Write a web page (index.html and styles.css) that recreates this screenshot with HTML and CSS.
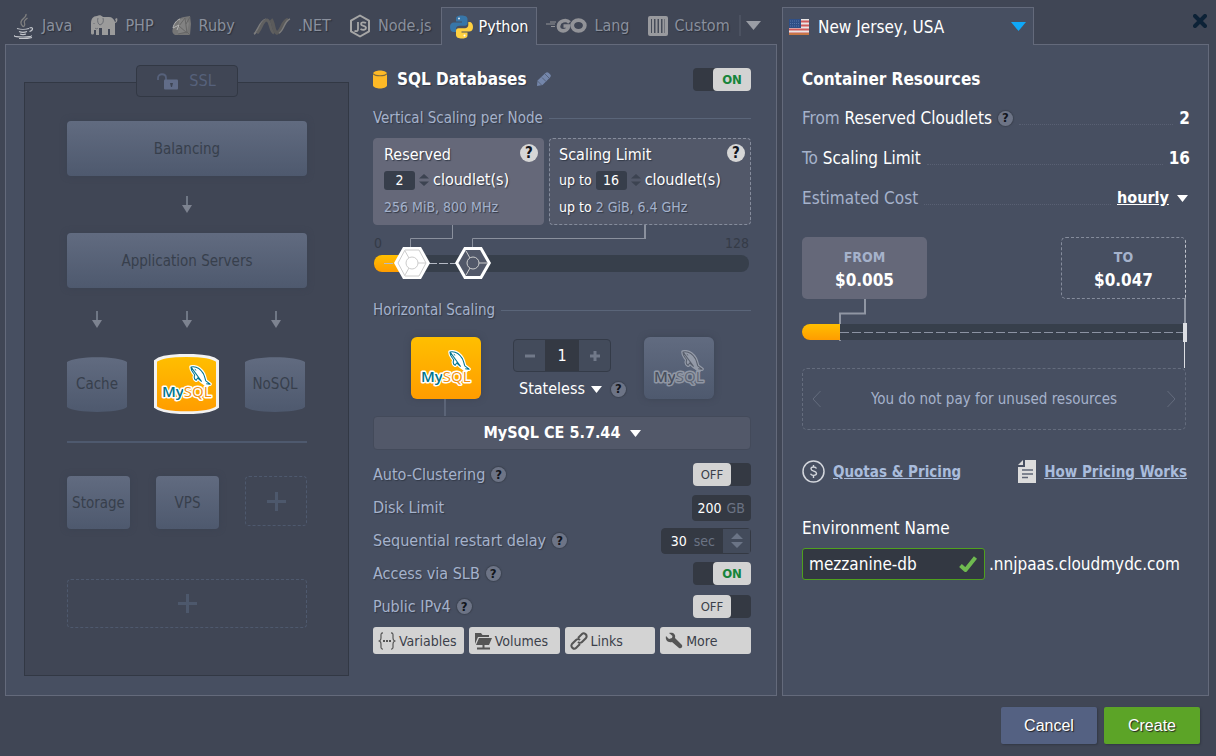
FILE: index.html
```html
<!DOCTYPE html>
<html lang="en">
<head>
<meta charset="utf-8">
<title>New Environment</title>
<link rel="stylesheet" href="styles.css">
</head>
<body>
<svg class="sprite" aria-hidden="true">
  <defs>
    <linearGradient id="db-fill" x1="0" y1="0" x2="0" y2="1"><stop offset="0" stop-color="#ffbf00"/><stop offset="1" stop-color="#ff9c00"/></linearGradient>
    <linearGradient id="idle-fill" x1="0" y1="0" x2="0" y2="1"><stop offset="0" stop-color="#616b80"/><stop offset="1" stop-color="#4e596e"/></linearGradient>
  </defs>
  <symbol id="dolphin" viewBox="0 0 24 24">
    <path d="M2 2C7 1 12 4 15 9c1.500 3 1.500 5 2.500 7.500l4.500 3.500-4-.5 1 2-4-3c-2-1.500-4-3.500-6-5L7.500 16C5.500 15 5 13 6 10.500 4 7 2 6 2 2z" fill="#fff" stroke="#fff" stroke-width="3.600" stroke-linejoin="round"/>
    <path d="M2 2C7 1 12 4 15 9c1.500 3 1.500 5 2.500 7.500l4.500 3.500-4-.5M13 17c-1.500-1-2.500-2-4-3.500L7.500 16C5.500 15 5 13 6 10.500 4 7 2 6 2 2z" fill="#fff" stroke="currentColor" stroke-width="1.100" stroke-linejoin="round"/>
    <path d="M6 4.500l1.500 1" stroke="currentColor"/>
  </symbol>
  <symbol id="down-arrow" viewBox="0 0 11 17">
    <path d="M4 0h2v9H4z" fill="#6f7785"/><path d="M0 9h10l-5 8z" fill="#7d8390"/>
  </symbol>
</svg>
<div class="page">
  <main class="wizard">
    <section class="builder">
      <nav class="tabs" aria-label="Language">
        <button class="tab" type="button">
          <svg width="22" height="26" viewBox="0 0 22 26" fill="none" stroke="#c3c6cc"><path d="M13 1c1 4-6 5-5 9 0 2 2 3 2 4M14.500 5c-3 2-4 3-3 5 1 2 0 3-1 4" stroke="#7f7f7f" stroke-width="1.300"/><path d="M4 15.500c3 1 9 1 12 0M6 18.500c2 .8 6 .8 8 0M7 21c2 .7 4 .7 6 0M16.500 15c4-1.500 4 2 0 3.500M2 22.500c-2 1.200 3 1.500 8 1.500s9-.5 8-1.500M6 25.500c4 .3 9 .2 13-1" stroke-width="1.200"/></svg>
          <span>Java</span></button>
        <button class="tab" type="button">
          <svg width="28" height="22" viewBox="0 0 28 22"><path d="M1 8c0-4 2-7 6-7 2-1 4-1 6 1h6c3 0 5 2 6 5 1 0 1-2 0-3l2-1c1 2 0 5-2 5v12h-5v-6h-2v6h-6v-7H9v7H6v-5H4v3c0 2-3 2-3 0z" fill="#9b9b9b"/><path d="M8 3c-1 3 0 6 2 7 3-1 4-4 3-7M4 8v1M5 13c1 1 2 1 3 0" fill="none" stroke="#6a6d74"/></svg>
          <span>PHP</span></button>
        <button class="tab" type="button">
          <svg width="20" height="20" viewBox="0 0 20 20"><path d="M12 1l6-1 1 8-1 11H3c-3-2-3-4-2-7 1-5 5-10 11-11z" fill="#767676"/><path d="M7 4l6-2 4 5-2 9-9 2z" fill="#828282"/><path d="M13 2l2 15-8-7zM6 18l9-2 3 3M18 1l-4 7" fill="none" stroke="#666"/><path d="M1 12c1-5 4-8 7-9M1 12l6-3-2 5" stroke="#b5b5b5" fill="none"/></svg>
          <span>Ruby</span></button>
        <button class="tab" type="button">
          <svg width="38" height="17" viewBox="0 0 38 17" fill="none"><path d="M1 16C5 14 7 2 13 1.500" stroke="#7c7c7c" stroke-width="2"/><path d="M4 15C8 12 9 2 14 2c4 1 3 12 7 13" stroke="#606060" stroke-width="3"/><path d="M18 1.500c3 3 2 12 6 13.500C29 13 29 3 35 1.500" stroke="#5b5b5b" stroke-width="3.500"/><path d="M26 15C31 13 31 3 37 1" stroke="#7c7c7c" stroke-width="1.500"/></svg>
          <span>.NET</span></button>
        <button class="tab" type="button">
          <svg width="22" height="24" viewBox="0 0 22 24" fill="none" stroke="#a6a6a6"><path d="M11 1.500l9 5.200v10.600l-9 5.200-9-5.200V6.700z" stroke-width="2" stroke-linejoin="round"/><path d="M9 8v7c0 2-1 2.500-3.500 2M17 9c-2-1.200-5-.8-5 1 0 2.500 5 1.300 5 4 0 2-3.500 2.300-5.500 1" stroke-width="1.800"/></svg>
          <span>Node.js</span></button>
        <button class="tab tab-active" type="button">
          <svg width="23" height="24" viewBox="0 0 23 24"><path d="M11.500.5C6 .5 6 2.800 6 4v2.500h6v1H4C1.500 7.500 0 9 0 12s1.500 5 3.500 5H6v-3c0-2 1.500-3.200 3.500-3.200H15c1.500 0 2.500-1.200 2.500-2.500V4c0-2.500-2.500-3.500-6-3.500z" fill="#3776a8"/><path d="M12 23.500c5.500 0 5.500-2.300 5.500-3.500v-2.500h-6v-1H19c2.500 0 4-1.500 4-4.500s-1.500-5-3.500-5h-1.200v3c0 2-1.500 3.200-3.300 3.200H8.500C7 13.200 6 14.400 6 15.700V20c0 2.500 2.500 3.500 6 3.500z" fill="#ffd141"/><circle cx="9" cy="3.500" r="1" fill="#dce6ef"/><circle cx="14.500" cy="20.500" r="1" fill="#fff"/></svg>
          <span>Python</span></button>
        <button class="tab" type="button">
          <svg width="41" height="16" viewBox="0 0 41 16" fill="none" stroke="#929398"><path d="M0 6h9M5 8.500h4M4 4h6" stroke-width="1"/><path d="M23.500 4.500c-3-3.500-10.500-2-11 3.500-.5 6.500 9.500 6.500 10 0h-5" stroke-width="3.600"/><ellipse cx="32.500" cy="7.500" rx="6.300" ry="5.400" stroke-width="3.800"/></svg>
          <span>Lang</span></button>
        <button class="tab" type="button">
          <svg width="20" height="20" viewBox="0 0 20 20"><rect width="20" height="20" rx="2" fill="#999a9e"/><path d="M3 3h14v14H3z" fill="#464c59"/><path d="M5 3v14M8.500 3v14M12 3v14M15.500 3v14" stroke="#999a9e" stroke-width="2"/></svg>
          <span>Custom</span></button>
        <button class="tab-more" type="button" aria-label="More languages"><svg width="15" height="9" viewBox="0 0 15 9"><path d="M0 0h15L7.500 9z" fill="#9a9da5"/></svg></button>
      </nav>

      <div class="panel builder-panel">
        <section class="topology" aria-label="Topology">
          <button class="ssl" type="button">
            <svg width="22" height="17" viewBox="0 0 22 17"><path d="M1 7V5c0-5 8-5 8 0v2" fill="none" stroke="#56617b" stroke-width="1.800"/><rect x="7" y="6.500" width="14" height="10" rx="1" fill="#616c88"/><path d="M13 10h3l-1 4h-1z" fill="#3e4554"/></svg>
            <span>SSL</span></button>
          <button class="layer" type="button">Balancing</button>
          <svg class="flow" width="11" height="17"><use href="#down-arrow"/></svg>
          <button class="layer" type="button">Application Servers</button>
          <div class="flow-row">
            <svg width="11" height="17"><use href="#down-arrow"/></svg>
            <svg width="11" height="17"><use href="#down-arrow"/></svg>
            <svg width="11" height="17"><use href="#down-arrow"/></svg>
          </div>
          <div class="stores">
            <button class="store" type="button">
              <svg class="store-shape" width="60" height="55" viewBox="0 0 60 55"><path d="M0 5C8-1.500 52-1.500 60 5v45c-8 6.500-52 6.500-60 0z" fill="url(#idle-fill)"/></svg>
              <span>Cache</span></button>
            <button class="store store-on" type="button" aria-label="MySQL">
              <svg width="65" height="60" viewBox="0 0 65 60"><path d="M1.500 7C10-.5 55-.5 63.500 7v46C55 60.500 10 60.500 1.500 53z" fill="url(#db-fill)" stroke="#f2f2f2" stroke-width="3"/><text class="logo-text" x="8" y="43"><tspan class="logo-my">My</tspan><tspan class="logo-sql">SQL</tspan></text><use class="logo-dolphin" href="#dolphin" x="35" y="11" width="23" height="23"/></svg></button>
            <button class="store" type="button">
              <svg class="store-shape" width="60" height="55" viewBox="0 0 60 55"><path d="M0 5C8-1.500 52-1.500 60 5v45c-8 6.500-52 6.500-60 0z" fill="url(#idle-fill)"/></svg>
              <span>NoSQL</span></button>
          </div>
          <hr class="split">
          <div class="extras">
            <button class="extra" type="button">Storage</button>
            <button class="extra" type="button">VPS</button>
            <button class="add add-small" type="button" aria-label="Add node"><svg width="19" height="19" viewBox="0 0 19 19"><path d="M9.500 0v19M0 9.500h19" stroke="#4d586c" stroke-width="3"/></svg></button>
          </div>
          <button class="add" type="button" aria-label="Add layer"><svg width="19" height="19" viewBox="0 0 19 19"><path d="M9.500 0v19M0 9.500h19" stroke="#4d586c" stroke-width="3"/></svg></button>
        </section>

        <section class="settings">
          <header class="settings-head">
            <svg width="14" height="19" viewBox="0 0 14 19"><path d="M0 3.500C1-.5 13-.5 14 3.500v12c-1 4-13 4-14 0z" fill="#fdb926"/><path d="M0 3.500c2 3 12 3 14 0" fill="none" stroke="#7d6a3e" stroke-width="1.200"/></svg>
            <h2>SQL Databases</h2>
            <button class="plain" type="button" aria-label="Rename"><svg width="14" height="14" viewBox="0 0 14 14"><path d="M0 14l.5-5.500L8.500 1c1-1 2-1.200 3-.3l1.800 1.800c.9 1 .7 2-.3 3L5.500 13z" fill="#7486aa"/><path d="M8 2l4 4M5 5.500l4 4M.5 9l4 4" stroke="#56627b" stroke-width="1"/></svg></button>
            <label class="toggle toggle-on"><input type="checkbox" checked aria-label="SQL Databases"><span>ON</span></label>
          </header>

          <h3 class="legend">Vertical Scaling per Node</h3>
          <div class="limits">
            <div class="limit limit-solid">
              <div class="limit-title">Reserved</div>
              <div class="limit-value"><input type="text" value="2" aria-label="Reserved cloudlets"><button class="step" type="button" aria-label="Change reserved"><svg width="10" height="12" viewBox="0 0 10 12"><path d="M0 4.500L5 0l5 4.500zM0 7.500h10L5 12z" fill="#3c4351"/></svg></button><span class="unit">cloudlet(s)</span></div>
              <div class="limit-note"><span>256 MiB, 800 MHz</span></div>
              <button class="help help-light" type="button">?</button>
            </div>
            <div class="limit limit-dashed">
              <div class="limit-title">Scaling Limit</div>
              <div class="limit-value">up to <input type="text" value="16" aria-label="Scaling limit cloudlets"><button class="step" type="button" aria-label="Change limit"><svg width="10" height="12" viewBox="0 0 10 12"><path d="M0 4.500L5 0l5 4.500zM0 7.500h10L5 12z" fill="#3c4351"/></svg></button><span class="unit">cloudlet(s)</span></div>
              <div class="limit-note">up to <span>2 GiB, 6.4 GHz</span></div>
              <button class="help help-light" type="button">?</button>
            </div>
          </div>
          <div class="scale">
            <svg class="scale-links" width="378" height="24" viewBox="0 0 378 24" fill="none" stroke="#8a909d"><path d="M79.500 0v13.500h-42V24M99.500 24V13.500h172" /><path d="M272 0v14" stroke-width="2"/></svg>
            <div class="scale-ends"><span>0</span><span>128</span></div>
            <div class="track"><div class="track-fill"></div><div class="track-dash"></div>
              <input class="knob knob-solid" type="range" min="0" max="100" value="6" aria-label="Reserved">
              <input class="knob knob-open" type="range" min="0" max="100" value="24" aria-label="Scaling limit">
            </div>
          </div>

          <h3 class="legend">Horizontal Scaling</h3>
          <div class="nodes">
            <button class="node node-on" type="button" aria-label="MySQL node"><svg width="56" height="40" viewBox="0 0 56 40"><text class="logo-text" x="3" y="34"><tspan class="logo-my">My</tspan><tspan class="logo-sql">SQL</tspan></text><use class="logo-dolphin" href="#dolphin" x="30" y="2" width="23" height="23"/></svg></button>
            <div class="count">
              <div class="counter">
                <button type="button" aria-label="Fewer"><svg width="12" height="12" viewBox="0 0 12 12"><path d="M1 6h10" stroke="#717989" stroke-width="3"/></svg></button>
                <input type="text" value="1" aria-label="Node count">
                <button type="button" aria-label="More"><svg width="12" height="12" viewBox="0 0 12 12"><path d="M1 6h10M6 1v10" stroke="#717989" stroke-width="3"/></svg></button>
              </div>
              <div class="mode">
                <select aria-label="Scaling mode"><option>Stateless</option></select>
                <svg width="11" height="7" viewBox="0 0 11 7"><path d="M0 0h11L5.500 7z" fill="#fff"/></svg>
                <button class="help" type="button">?</button>
              </div>
            </div>
            <button class="node node-off" type="button" aria-label="Additional MySQL node"><svg width="56" height="40" viewBox="0 0 56 40" opacity=".35"><text class="logo-text" x="3" y="34"><tspan class="logo-my">My</tspan><tspan class="logo-sql">SQL</tspan></text><use class="logo-dolphin" href="#dolphin" x="30" y="2" width="23" height="23"/></svg></button>
          </div>
          <div class="version">
            <select aria-label="Stack version"><option>MySQL CE 5.7.44</option></select>
            <svg width="11" height="7" viewBox="0 0 11 7"><path d="M0 0h11L5.500 7z" fill="#fff"/></svg>
          </div>

          <div class="options">
            <div class="option"><span>Auto-Clustering</span><button class="help" type="button">?</button>
              <label class="toggle"><input type="checkbox" aria-label="Auto-Clustering"><span>OFF</span></label></div>
            <div class="option"><label for="disk">Disk Limit</label>
              <div class="field"><input id="disk" type="text" value="200"><span>GB</span></div></div>
            <div class="option"><label for="delay">Sequential restart delay</label><button class="help" type="button">?</button>
              <div class="field field-step"><input id="delay" type="text" value="30"><span>sec</span><button type="button" aria-label="Change delay"><svg width="12" height="15" viewBox="0 0 12 15"><path d="M0 6l6-6 6 6zM0 9h12l-6 6z" fill="#6b7486"/></svg></button></div></div>
            <div class="option"><span>Access via SLB</span><button class="help" type="button">?</button>
              <label class="toggle toggle-on"><input type="checkbox" checked aria-label="Access via SLB"><span>ON</span></label></div>
            <div class="option"><span>Public IPv4</span><button class="help" type="button">?</button>
              <label class="toggle"><input type="checkbox" aria-label="Public IPv4"><span>OFF</span></label></div>
          </div>
          <div class="actions">
            <button type="button"><svg width="18" height="18" viewBox="0 0 18 18" fill="none" stroke="#555"><path d="M5 .8C2.500.8 3 3 3 5.500S2.500 9 .5 9C2.500 9 3 10 3 12.500s-.5 4.700 2 4.700M13 .8c2.500 0 2 2.200 2 4.700S15.500 9 17.500 9C15.500 9 15 10 15 12.500s.5 4.700-2 4.700" stroke-width="1.200"/><path d="M5 9h8" stroke-width="2" stroke-dasharray="2 1"/></svg>Variables</button>
            <button type="button"><svg width="18" height="18" viewBox="0 0 18 18" fill="#555"><path d="M1 1h6l1.500 2H15v2H4L1 12zM5 6h13l-3 7H2zM8.500 13h2v3h-2zM3 15.500h13v2H3z"/></svg>Volumes</button>
            <button type="button"><svg width="18" height="18" viewBox="0 0 18 18" fill="none" stroke="#555" stroke-width="2"><path d="M8 6l4-4c2-2 6 1 4 4l-4 4c-1 1-3 1-4 0M10 12l-4 4c-2 2-6-1-4-4l4-4c1-1 3-1 4 0"/></svg>Links</button>
            <button type="button"><svg width="18" height="18" viewBox="0 0 18 18" fill="#555"><path d="M4 1c4-1 7 1 6 5l7 7c1 2-1 4-3 3L7 10C3 11 0 8 1 4l3 3 3-1 .5-2z"/></svg>More</button>
          </div>
        </section>
      </div>
    </section>

    <section class="summary">
      <div class="summary-top">
        <div class="region">
          <svg width="20" height="16" viewBox="0 0 20 16"><rect width="20" height="16" fill="#e9e5e5"/><path d="M0 2.500h20M0 6.500h20M0 10.500h20M0 14.500h20" stroke="#cf5a5a" stroke-width="1.800"/><rect width="12" height="9" fill="#2f4f86"/><path d="M1 2h10M1 4.500h10M1 7h10" stroke="#5875a8" stroke-dasharray="1 1"/><path d="M0 15h20" stroke="#c77645" stroke-width="2"/></svg>
          <select aria-label="Region"><option>New Jersey, USA</option></select>
          <svg width="15" height="9" viewBox="0 0 15 9"><path d="M0 0h15L7.500 9z" fill="#0fa8f8"/></svg>
        </div>
        <button class="plain close" type="button" aria-label="Close"><svg width="14" height="14" viewBox="0 0 14 14"><path d="M2 2l10 10M12 2L2 12" stroke="#0d2237" stroke-width="4" stroke-linecap="round"/></svg></button>
      </div>
      <div class="panel summary-panel">
        <h2>Container Resources</h2>
        <div class="line"><span><i>From</i> Reserved Cloudlets</span><button class="help" type="button">?</button><span class="dots"></span><b>2</b></div>
        <div class="line"><span><i>To</i> Scaling Limit</span><span class="dots"></span><b>16</b></div>
        <div class="line"><span><i>Estimated Cost</i></span><span class="dots"></span>
          <select class="period" aria-label="Billing period"><option>hourly</option></select>
          <svg width="11" height="7" viewBox="0 0 11 7"><path d="M0 0h11L5.500 7z" fill="#fff"/></svg></div>

        <div class="prices">
          <div class="price price-from"><span>FROM</span><b>$0.005</b></div>
          <div class="price price-to"><span>TO</span><b>$0.047</b></div>
        </div>
        <div class="cost">
          <svg class="cost-link" width="66" height="42" viewBox="0 0 66 42" fill="none" stroke="#9096a3" stroke-width="2"><path d="M63 0v14.500H38V42"/></svg>
          <div class="cost-bar"><div class="cost-fill"></div><div class="cost-dash"></div><div class="cost-mark"></div></div>
        </div>
        <div class="note">
          <button class="plain" type="button" aria-label="Previous"><svg width="9" height="18" viewBox="0 0 9 18"><path d="M8.500 1L1 9l7.500 8" fill="none" stroke="#646c7d"/></svg></button>
          <span>You do not pay for unused resources</span>
          <button class="plain" type="button" aria-label="Next"><svg width="9" height="18" viewBox="0 0 9 18"><path d="M.5 1L8 9 .5 17" fill="none" stroke="#646c7d"/></svg></button>
        </div>

        <div class="links">
          <a href="#quotas"><svg width="23" height="23" viewBox="0 0 23 23" fill="none" stroke="#d3d6dc"><circle cx="11.500" cy="11.500" r="10.500" stroke-width="1.500"/><path d="M14.500 8.500c-1-2-5.500-2-5.500.3 0 3 5.500 1.700 5.500 4.800 0 2.400-5 2.400-6 .2M11.500 5v2M11.500 15.500v2.500" stroke-width="1.400"/></svg><span>Quotas &amp; Pricing</span></a>
          <a href="#pricing"><svg width="18" height="23" viewBox="0 0 18 23"><path d="M7 0h11v23H0V7h7z" fill="#dcdcdc"/><path d="M5 0v5H0z" fill="#dcdcdc"/><path d="M4 10h11M4 14h11M4 17.500h6" stroke="#5e6575" stroke-width="1.500"/></svg><span>How Pricing Works</span></a>
        </div>

        <label class="env-label" for="env">Environment Name</label>
        <div class="env">
          <div class="env-box"><input id="env" type="text" value="mezzanine-db"><svg width="18" height="16" viewBox="0 0 18 16"><path d="M1.500 9.500L6.500 14 16.500 1.500" fill="none" stroke="#6fba50" stroke-width="4" stroke-linejoin="round"/></svg></div>
          <span>.nnjpaas.cloudmydc.com</span>
        </div>
      </div>
    </section>
  </main>
  <footer class="footer">
    <button class="btn btn-cancel" type="button">Cancel</button>
    <button class="btn btn-create" type="button">Create</button>
  </footer>
</div>
</body>
</html>
```
FILE: styles.css
```css
* { box-sizing: border-box; }

body {
  margin: 0;
  background: #404655;
  color: #fff;
  font: 16px/20px "DejaVu Sans Condensed", "DejaVu Sans", sans-serif;
}

button, input, select {
  margin: 0;
  padding: 0;
  border: 0;
  background: none;
  color: inherit;
  font: inherit;
}

select { appearance: none; }
select option { color: #222; }
svg { display: block; flex: none; }
h2, h3 { margin: 0; font-weight: bold; }
.sprite { position: absolute; width: 0; height: 0; }
.plain { display: flex; }

.page {
  display: flex;
  flex-direction: column;
  min-height: 100vh;
}

.wizard {
  flex: 1;
  display: grid;
  grid-template-columns: minmax(0, 772fr) minmax(0, 427fr);
  gap: 5px;
  padding: 7px 7px 0 5px;
}

.builder, .summary {
  display: flex;
  flex-direction: column;
}

.panel {
  flex: 1;
  border: 1px solid #646a7b;
  background: #474f61;
}

/* Language tabs */
.tabs {
  display: flex;
  align-items: stretch;
  height: 37px;
  margin-left: -1px;
}

.tab {
  display: flex;
  align-items: center;
  gap: 7px;
  padding: 0 8px;
  border: 1px solid transparent;
  border-bottom: 0;
  color: #8a909d;
  text-shadow: 1px 1px 1px #2b303b;
}

.tab-active {
  height: 38px;
  position: relative;
  gap: 6px;
  border-color: #646a7b;
  background: #474f61;
  color: #fff;
}

.tab-more {
  align-self: center;
  padding: 6px 0 6px 5px;
  border-left: 2px solid #4c5261;
}

.builder-panel {
  display: grid;
  grid-template-columns: minmax(0, 325fr) minmax(0, 378fr);
  gap: 24px;
  padding: 22px 25px 19px 18px;
}

/* Topology */
.topology {
  position: relative;
  display: flex;
  flex-direction: column;
  margin-top: 15px;
  padding: 38px 41px 0 42px;
  border: 1px solid #323844;
  background: #404655;
  color: #373f4c;
  font-size: 15px;
}

.ssl {
  position: absolute;
  top: -18px;
  left: 50%;
  width: 102px;
  height: 32px;
  margin-left: -51px;
  display: flex;
  align-items: center;
  justify-content: center;
  gap: 10px;
  border: 1px solid #323844;
  border-radius: 4px;
  background: #404655;
  color: #56617b;
  font-size: 16px;
}

.layer {
  height: 55px;
  border-radius: 4px;
  background: linear-gradient(#616b80, #4e596e);
  box-shadow: 0 0 6px #3a4352;
}

.flow { align-self: center; margin: 20px 0; }

.flow-row {
  display: flex;
  justify-content: space-between;
  margin: 23px 25px 26px;
}

.stores {
  display: flex;
  align-items: center;
  justify-content: space-between;
  height: 60px;
  padding-right: 2px;
}

.store {
  display: grid;
  place-items: center;
}

.store > * { grid-area: 1 / 1; }

.logo-text {
  font: 600 15px "Open Sans", sans-serif;
  stroke: #fff;
  stroke-width: 3px;
  stroke-linejoin: round;
  paint-order: stroke;
}

.logo-my { fill: #00758f; }
.logo-sql { fill: #f29111; font-weight: 400; }
.logo-dolphin { color: #00758f; }

.split {
  width: 100%;
  height: 2px;
  margin: 27px 0 33px;
  border: 0;
  background: #4e596e;
}

.extras {
  display: flex;
  justify-content: space-between;
  margin-bottom: 50px;
}

.extra {
  width: 63px;
  height: 53px;
  border-radius: 4px;
  background: linear-gradient(#616b80, #4e596e);
  box-shadow: 0 0 6px #3a4352;
}

.add {
  display: flex;
  align-items: center;
  justify-content: center;
  height: 49px;
  border: 1px dashed #4e596e;
  border-radius: 4px;
}

.add-small { width: 62px; height: 50px; }

/* Settings */
.settings { text-shadow: 1px 1px 1px #323947; }

.settings-head {
  display: flex;
  align-items: center;
  gap: 10px;
  height: 24px;
}

.settings-head h2 { font-size: 17px; }

.toggle {
  display: flex;
  width: 58px;
  height: 23px;
  margin-left: auto;
  border-radius: 4px;
  background: #343943;
  color: #3b3f4a;
  font-size: 13px;
  text-shadow: none;
}

.toggle input {
  position: absolute;
  opacity: 0;
}

.toggle span {
  width: 38px;
  border-radius: 4px;
  background: #d3d3d3;
  line-height: 23px;
  text-align: center;
}

.toggle-on { justify-content: flex-end; }
.toggle-on span { color: #16843a; font-weight: bold; }

.legend {
  display: flex;
  align-items: center;
  gap: 6px;
  margin: 17px 0 10px;
  color: #a5b2cb;
  font-size: 15px;
  font-weight: normal;
}

.legend::after {
  content: "";
  flex: 1;
  border-top: 1px solid #5a6579;
}

.limits {
  display: grid;
  grid-template-columns: 171fr 202fr;
  gap: 5px;
}

.limit {
  position: relative;
  height: 87px;
  padding: 6px 9px;
  border: 1px solid #656879;
  border-radius: 4px;
  font-size: 14px;
}

.limit-solid { padding-left: 10px; background: #656879; }
.limit-dashed { border: 1px dashed #858c9c; background: #525869; }
.limit-title { font-size: 16px; }

.limit-value {
  display: flex;
  align-items: center;
  gap: 4px;
  margin: 5px 0 7px;
}

.limit-value input {
  width: 31px;
  height: 19px;
  border-radius: 3px;
  background: #373e4b;
  text-align: center;
  text-shadow: none;
}

.step { display: flex; }
.unit { font-size: 16px; }
.limit-note span { color: #a5b2cb; }

.help {
  display: flex;
  align-items: center;
  justify-content: center;
  flex: none;
  width: 15px;
  height: 15px;
  border-radius: 50%;
  background: #6d7486;
  box-shadow: 0 0 1px 1px #3c4351;
  color: #12151c;
  font-size: 13px;
  font-weight: bold;
  text-shadow: none;
}

.help-light {
  position: absolute;
  top: 5px;
  right: 5px;
  width: 18px;
  height: 18px;
  background: #d6d6d6;
  box-shadow: none;
  font-size: 15px;
}

.scale { position: relative; padding: 8px 2px 11px 1px; }
.scale-links { position: absolute; top: 0; left: 0; }

.scale-ends {
  display: flex;
  justify-content: space-between;
  color: #353b47;
  font-size: 14px;
  text-shadow: none;
}

.track {
  position: relative;
  height: 17px;
  margin-top: 2px;
  border-radius: 8px;
  background: #373f4b;
}

.track-fill {
  width: 12%;
  height: 17px;
  border-radius: 8px 0 0 8px;
  background: linear-gradient(#ffbf00, #ff9c00);
}

.track-dash {
  position: absolute;
  top: 8px;
  left: 10px;
  width: 72px;
  height: 1px;
  background: repeating-linear-gradient(90deg, #b5bac5 0 9px, transparent 9px 11px);
}

.knob {
  position: absolute;
  top: -8px;
  left: 0;
  width: 100%;
  height: 32px;
  appearance: none;
  pointer-events: none;
}

.knob::-webkit-slider-thumb {
  width: 36px;
  height: 32px;
  appearance: none;
  pointer-events: auto;
}

.knob-solid::-webkit-slider-thumb {
  background: url("data:image/svg+xml,%3Csvg xmlns='http://www.w3.org/2000/svg' width='36' height='32'%3E%3Cpath d='M9 0h18l9 16-9 16H9L0 16z' fill='%23fff'/%3E%3Cpath d='M11 3h14l7 13-7 13H11L4 16zM11 4l4 7M24 16h8M15 21l-4 7' fill='none' stroke='%23ccc'/%3E%3Ccircle cx='18' cy='16' r='6' fill='%23fff' stroke='%23ccc'/%3E%3C/svg%3E");
}

.knob-open::-webkit-slider-thumb {
  background: url("data:image/svg+xml,%3Csvg xmlns='http://www.w3.org/2000/svg' width='36' height='32'%3E%3Cpath d='M10 1.500h16l8.300 14.500-8.300 14.500h-16L1.700 16z' fill='%23525869' stroke='%23fff' stroke-width='3'/%3E%3Cpath d='M11 4l4 7M24 16h8M15 21l-4 7' fill='none' stroke='%23ccc'/%3E%3Ccircle cx='18' cy='16' r='6' fill='none' stroke='%23ccc'/%3E%3C/svg%3E");
}

.nodes {
  display: flex;
  justify-content: space-between;
  padding: 7px 37px 0 38px;
}

.node {
  position: relative;
  display: flex;
  align-items: center;
  justify-content: center;
  width: 70px;
  height: 62px;
  border-radius: 6px;
  box-shadow: 0 0 6px #3d4555;
  text-shadow: none;
}

.node-on { background: linear-gradient(#ffbf00, #ff9c00); }
.node-off { background: linear-gradient(#616b80, #4e596e); }
.node-off .logo-my { fill: #333; }
.node-off .logo-sql { fill: #777; }
.node-off .logo-dolphin { color: #555; }

.node-on::after {
  content: "";
  position: absolute;
  top: 62px;
  left: 33px;
  width: 2px;
  height: 17px;
  background: #5b6477;
}

.count { padding: 2px 0 0 14px; }

.counter {
  display: grid;
  grid-template-columns: 31px 34px 31px;
  width: 98px;
  height: 33px;
  border: 1px solid #343b48;
  border-radius: 4px;
  background: #434b5b;
}

.counter button {
  display: flex;
  align-items: center;
  justify-content: center;
}

.counter input {
  width: 34px;
  background: #343943;
  text-align: center;
}

.mode {
  display: flex;
  align-items: center;
  gap: 6px;
  margin-top: 7px;
  padding-left: 6px;
}

.mode .help { margin-left: 3px; }

.version {
  display: flex;
  align-items: center;
  justify-content: center;
  gap: 9px;
  height: 34px;
  margin-top: 17px;
  border: 1px solid #434a5a;
  border-radius: 4px;
  background: #525869;
  font-weight: bold;
}

.options { margin-top: 8px; }

.option {
  display: flex;
  align-items: center;
  gap: 6px;
  height: 33px;
  color: #a5b2cb;
}

.field {
  display: flex;
  align-items: center;
  height: 26px;
  margin-left: auto;
  padding: 0 6px;
  border-radius: 4px;
  background: #343943;
  color: #6b7384;
  font-size: 14px;
  text-shadow: none;
}

.field input {
  width: 29px;
  color: #fff;
}

.field-step {
  padding: 0;
  border: 1px solid #343943;
}

.field-step input { width: 32px; padding-left: 9px; }

.field-step button {
  display: flex;
  align-items: center;
  align-self: stretch;
  justify-content: center;
  width: 27px;
  margin-left: 8px;
  background: #434b5b;
}

.actions {
  display: grid;
  grid-template-columns: repeat(4, 1fr);
  gap: 5px;
  margin-top: 4px;
}

.actions button {
  display: flex;
  align-items: center;
  gap: 3px;
  height: 27px;
  padding-left: 5px;
  border-radius: 3px;
  background: #d3d3d3;
  color: #3b3f4a;
  font-size: 14px;
  text-shadow: none;
}

/* Summary */
.summary { font-size: 17px; }

.summary-top {
  display: flex;
  align-items: flex-start;
  justify-content: space-between;
  height: 37px;
}

.region {
  position: relative;
  display: flex;
  align-items: center;
  gap: 9px;
  width: 252px;
  height: 38px;
  padding: 0 7px 0 6px;
  border: 1px solid #646a7b;
  border-bottom: 0;
  background: #474f61;
}

.region select { flex: 1; min-width: 0; }
.close { margin: 7px 2px 0 0; }
.summary-panel { padding: 24px 18px 0 19px; }
.summary-panel h2 { margin-bottom: 19px; font-size: 17px; }

.line {
  display: flex;
  align-items: center;
  gap: 6px;
  height: 20px;
  margin-bottom: 20px;
}

.line i { color: #a5b2cb; font-style: normal; }

.dots {
  flex: 1;
  height: 14px;
  border-bottom: 1px dotted #596073;
}

.line svg { margin: 0 2px; }
.period { font-size: 16px; font-weight: bold; text-decoration: underline; }

.prices {
  display: flex;
  justify-content: space-between;
  margin-top: 29px;
  padding-right: 4px;
}

.price {
  display: flex;
  flex-direction: column;
  justify-content: center;
  gap: 3px;
  width: 125px;
  height: 62px;
  border-radius: 5px;
  text-align: center;
}

.price span { color: #a5b2cb; font-size: 14px; font-weight: bold; }
.price-from { background: #656879; }
.price-to { border: 1px dashed #858c9c; border-right-color: #c3c6ce; border-bottom-right-radius: 0; }

.cost {
  position: relative;
  padding: 25px 5px 28px 0;
}

.cost-link { position: absolute; top: 0; left: 0; }

.cost-bar {
  position: relative;
  height: 16px;
  border-radius: 8px 0 0 8px;
  background: #373f4b;
}

.cost-fill {
  width: 10%;
  height: 16px;
  border-radius: 8px 0 0 8px;
  background: linear-gradient(#ffbf00, #ff9c00);
}

.cost-dash {
  position: absolute;
  top: 8px;
  left: 10%;
  right: 2px;
  height: 1px;
  background: repeating-linear-gradient(90deg, #8c93a3 0 9px, transparent 9px 12px);
}

.cost-mark {
  position: absolute;
  top: -1px;
  right: -2px;
  width: 4px;
  height: 19px;
  background: #dcdee3;
}

.cost-mark::before, .cost-mark::after {
  content: "";
  position: absolute;
  left: 1px;
}

.cost-mark::before { bottom: 19px; width: 2px; height: 25px; background: #9096a3; }
.cost-mark::after { top: 19px; width: 1px; height: 26px; background: #dcdee3; }

.note {
  display: flex;
  align-items: center;
  justify-content: space-between;
  height: 62px;
  margin-right: 4px;
  padding: 0 9px;
  border: 1px dashed #646c7d;
  border-radius: 5px;
  color: #a5b2cb;
  font-size: 15px;
}

.links {
  display: flex;
  justify-content: space-between;
  margin: 30px 3px 35px 0;
}

.links a {
  display: flex;
  align-items: center;
  gap: 8px;
  color: #a9bcdc;
  font-size: 15px;
  font-weight: bold;
}

.env-label { display: block; margin-bottom: 10px; }
.env { display: flex; align-items: center; gap: 4px; }

.env-box {
  display: flex;
  align-items: center;
  width: 183px;
  height: 32px;
  padding: 0 7px 0 6px;
  border: 1px solid #4fa01e;
  border-radius: 3px;
  background: #333842;
}

.env-box input { flex: 1; min-width: 0; outline: 0; }

.footer {
  display: flex;
  justify-content: flex-end;
  gap: 7px;
  padding: 11px 16px 12px;
}

.btn {
  width: 96px;
  height: 37px;
  border-radius: 2px;
  font: 16px/20px "Liberation Sans", sans-serif;
  text-shadow: 1px 1px 1px #222;
  box-shadow: 1px 1px 2px #323844;
}

.btn-cancel { background: #546182; }
.btn-create { background: #5ca427; }
```
